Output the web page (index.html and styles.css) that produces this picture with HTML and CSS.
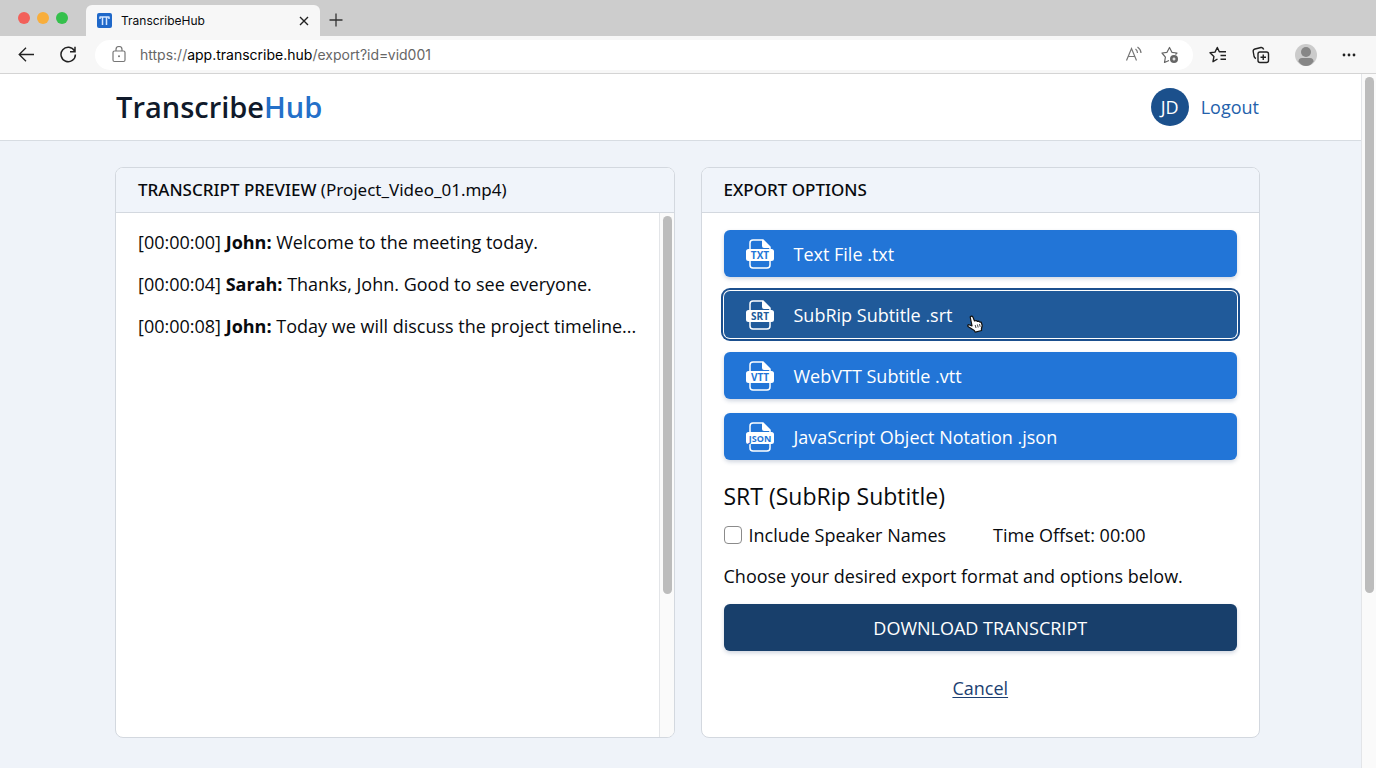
FILE: index.html
```
<!DOCTYPE html>
<html lang="en">
<head>
    <meta charset="UTF-8">
    <meta name="viewport" content="width=device-width, initial-scale=1.0">
    <title>TranscribeHub</title>
    <link rel="stylesheet" href="styles.css">
</head>
<body>
    <div class="tabbar">
        <div class="lights">
            <span class="light red"></span>
            <span class="light yellow"></span>
            <span class="light green"></span>
        </div>
        <div class="tab">
            <svg class="favicon" width="15" height="15" viewBox="0 0 15 15">
                <rect width="15" height="15" rx="2" fill="#1f68c9"/>
                <path d="M2.500 4h10M5.500 4v8M9.500 4v8M3 6V4M12 6V4" fill="none" stroke="#d5e6ff" stroke-width="1.500"/>
            </svg>
            <span class="tab-title">TranscribeHub</span>
            <button class="icon-btn" aria-label="Close tab">
                <svg width="10" height="10" viewBox="0 0 10 10" fill="none" stroke="#222" stroke-width="1.4"><path d="M1 1l8 8M9 1l-8 8"/></svg>
            </button>
        </div>
        <button class="icon-btn new-tab" aria-label="New tab">
            <svg width="14" height="14" viewBox="0 0 14 14" fill="none" stroke="#333" stroke-width="1.3"><path d="M7 0.500v13M0.500 7h13"/></svg>
        </button>
    </div>

    <div class="toolbar">
        <button class="icon-btn" aria-label="Back">
            <svg width="18" height="18" viewBox="0 0 18 18" fill="none" stroke="#222" stroke-width="1.3"><path d="M16 8.500H1.500M8 1.700L1.200 8.500l6.800 6.800"/></svg>
        </button>
        <button class="icon-btn" aria-label="Reload">
            <svg width="18" height="18" viewBox="0 0 18 18" fill="none" stroke="#222" stroke-width="1.5"><path d="M14.500 5A7.200 7.200 0 1 0 15.400 8.500M15 .8v5h-5"/></svg>
        </button>
        <div class="address">
            <svg width="14" height="18" viewBox="0 0 14 18" fill="none" stroke="#777" stroke-width="1.2"><rect x="1" y="5" width="12" height="10.500" rx="1.500"/><path d="M4 5V3.500a3 3 0 0 1 6 0V5"/><circle cx="7" cy="10.300" r="1" fill="#777" stroke="none"/></svg>
            <span class="url">https://<b>app.transcribe.hub</b>/export?id=vid001</span>
            <button class="icon-btn" aria-label="Read aloud">
                <svg width="18" height="18" viewBox="0 0 18 18" fill="none" stroke="#777" stroke-width="1.2"><path d="M1.500 14.500L6.500 2.500l5 12M3.300 10.500h6.400M10.500 3q2 1.500 2 4M12.500 1q3.500 2.500 3.500 6"/></svg>
            </button>
            <button class="icon-btn" aria-label="Add to favorites">
                <svg width="18" height="18" viewBox="0 0 18 18" fill="none" stroke="#666" stroke-width="1.200" stroke-linejoin="round"><path d="M8 14.500l-4.500 2 .9-5.400L1 7l5-.7L8.500 1.500l2.400 4.800 5.100.7-1.500 1.500"/><circle cx="13" cy="13" r="4" fill="#666" stroke="none"/><path d="M13 11.500v3M11.500 13h3" stroke="#fff"/></svg>
            </button>
        </div>
        <div class="tools">
            <button class="icon-btn" aria-label="Favorites">
                <svg width="18" height="18" viewBox="0 0 18 18" fill="none" stroke="#222" stroke-width="1.400" stroke-linejoin="round"><path d="M8.500 13L4 15.700l.9-5.100L1 6.800l5-.7 2.300-4.600 2 4.300H17M11.500 9.500H17M11.500 13.200H17"/></svg>
            </button>
            <button class="icon-btn" aria-label="Collections">
                <svg width="18" height="18" viewBox="0 0 18 18" fill="none" stroke="#222" stroke-width="1.400" stroke-linejoin="round"><rect x="6" y="6" width="10.500" height="10.500" rx="2"/><path d="M11.250 8.500v5.500M8.500 11.250H14M4 12.500q-1.500-.5-1.900-2L1.200 5.500Q1 3.500 3 3l6-1.500q2-.3 2.700 2"/></svg>
            </button>
            <button class="icon-btn" aria-label="Profile">
                <svg width="22" height="22" viewBox="0 0 22 22"><circle cx="11" cy="11" r="11" fill="#cbcbcb"/><circle cx="11" cy="8" r="5" fill="#868686"/><path d="M3.500 17.500Q3.500 14 7 14h8q3.500 0 3.500 3.500Q15.500 22 11 22t-7.500-4.500z" fill="#868686"/></svg>
            </button>
            <button class="icon-btn" aria-label="Settings">
                <svg width="14" height="4" viewBox="0 0 14 4" fill="#222"><circle cx="2" cy="2" r="1.400"/><circle cx="7" cy="2" r="1.400"/><circle cx="12" cy="2" r="1.400"/></svg>
            </button>
        </div>
    </div>

    <div class="viewport">
        <div class="page">
            <header class="header">
                <div class="logo">Transcribe<span>Hub</span></div>
                <div class="user">
                    <span class="avatar">JD</span>
                    <a class="logout" href="#">Logout</a>
                </div>
            </header>

            <main class="main">
                <section class="panel">
                    <h2 class="panel-head">TRANSCRIPT PREVIEW <span>(Project_Video_01.mp4)</span></h2>
                    <div class="preview">
                        <div class="lines">
                            <p>[00:00:00] <b>John:</b> Welcome to the meeting today.</p>
                            <p>[00:00:04] <b>Sarah:</b> Thanks, John. Good to see everyone.</p>
                            <p>[00:00:08] <b>John:</b> Today we will discuss the project timeline...</p>
                        </div>
                        <div class="scrollbar"><div class="thumb preview-thumb"></div></div>
                    </div>
                </section>

                <section class="panel">
                    <h2 class="panel-head">EXPORT OPTIONS</h2>
                    <div class="export">
                        <div class="formats">
                            <button class="format">
                                <svg class="file" width="28" height="30" viewBox="0 0 28 30"><path d="M4 11V4q0-3 3-3h10l7 7v4M4 20v6q0 3 3 3h14q3 0 3-3v-6" fill="none" stroke="#fff" stroke-width="1.500"/><path d="M16 1v6q0 2 2 2h6V8l-7-7zM2.500 10h23q2.500 0 2.500 2.500v7q0 2.500-2.500 2.500h-23Q0 22 0 19.500v-7Q0 10 2.500 10z" fill="#fff"/><text x="14" y="20" text-anchor="middle">TXT</text></svg>
                                Text File .txt
                            </button>
                            <button class="format active">
                                <svg class="file" width="28" height="30" viewBox="0 0 28 30"><path d="M4 11V4q0-3 3-3h10l7 7v4M4 20v6q0 3 3 3h14q3 0 3-3v-6" fill="none" stroke="#fff" stroke-width="1.500"/><path d="M16 1v6q0 2 2 2h6V8l-7-7zM2.500 10h23q2.500 0 2.500 2.500v7q0 2.500-2.500 2.500h-23Q0 22 0 19.500v-7Q0 10 2.500 10z" fill="#fff"/><text x="14" y="20" text-anchor="middle">SRT</text></svg>
                                SubRip Subtitle .srt
                                <svg class="pointer" width="16" height="18" viewBox="0 0 16 18" fill="#fff" stroke="#111" stroke-width="1.200" stroke-linejoin="round"><path d="M3.200 2Q4.800.2 6 2.200L7.500 6l1.700-.5 1 .8 1.600-.2 1 1 1.400.1 1 3.300-.8 3.500.2 1.500-6.300 1.700-1-1.700L1 11.500Q.3 9.700 2 9.700l3 1.200z"/><path d="M8.200 10l.8 3M10.400 9.500l.8 3M12.500 9l.7 2.800" stroke-width=".8"/></svg>
                            </button>
                            <button class="format">
                                <svg class="file" width="28" height="30" viewBox="0 0 28 30"><path d="M4 11V4q0-3 3-3h10l7 7v4M4 20v6q0 3 3 3h14q3 0 3-3v-6" fill="none" stroke="#fff" stroke-width="1.500"/><path d="M16 1v6q0 2 2 2h6V8l-7-7zM2.500 10h23q2.500 0 2.500 2.500v7q0 2.500-2.500 2.500h-23Q0 22 0 19.500v-7Q0 10 2.500 10z" fill="#fff"/><text x="14" y="20" text-anchor="middle">VTT</text></svg>
                                WebVTT Subtitle .vtt
                            </button>
                            <button class="format">
                                <svg class="file json" width="28" height="30" viewBox="0 0 28 30"><path d="M4 11V4q0-3 3-3h10l7 7v4M4 20v6q0 3 3 3h14q3 0 3-3v-6" fill="none" stroke="#fff" stroke-width="1.500"/><path d="M16 1v6q0 2 2 2h6V8l-7-7zM2.500 10h23q2.500 0 2.500 2.500v7q0 2.500-2.500 2.500h-23Q0 22 0 19.500v-7Q0 10 2.500 10z" fill="#fff"/><text x="14" y="20" text-anchor="middle">JSON</text></svg>
                                JavaScript Object Notation .json
                            </button>
                        </div>
                        <h3 class="format-title">SRT (SubRip Subtitle)</h3>
                        <div class="options">
                            <label class="check"><input type="checkbox"> Include Speaker Names</label>
                            <span>Time Offset: 00:00</span>
                        </div>
                        <p class="hint">Choose your desired export format and options below.</p>
                        <button class="download">DOWNLOAD TRANSCRIPT</button>
                        <a class="cancel" href="#">Cancel</a>
                    </div>
                </section>
            </main>
        </div>
        <div class="scrollbar"><div class="thumb page-thumb"></div></div>
    </div>
</body>
</html>
```
FILE: styles.css
```
*{
    margin: 0; padding: 0;
    box-sizing: border-box;
}
body{
    display: flex;
    flex-direction: column;
    min-height: 100vh;
    font-family: 'Open Sans', sans-serif;
    font-size: 18px;
    line-height: 26px;
    color: #080a0e;
    background: #eff3f9;
}
button{
    font: inherit;
    border: none;
    cursor: pointer;
}
svg{
    display: block;
    flex: none;
}
.icon-btn{
    background: none;
}

/* browser window */
.tabbar{
    display: flex;
    align-items: center;
    height: 36px;
    padding-left: 18px;
    background: #cdcdcd;
    font-family: Inter, sans-serif;
}
.lights{
    display: flex;
    gap: 7px;
    width: 68px;
}
.light{
    width: 12px;
    height: 12px;
    border-radius: 50%;
}
.red{ background: #f2605a; }
.yellow{ background: #f8ae3c; }
.green{ background: #35c04c; }
.tab{
    display: flex;
    align-items: center;
    align-self: flex-end;
    gap: 9px;
    width: 234px;
    height: 31px;
    padding: 0 11px;
    border-radius: 6px 6px 0 0;
    background: #f7f7f7;
}
.tab-title{
    flex: 1;
    font-size: 12px;
}
.new-tab{
    margin-left: 9px;
    padding-top: 4px;
}
.toolbar{
    display: flex;
    align-items: center;
    gap: 24px;
    height: 38px;
    padding: 0 20px 0 18px;
    border-bottom: 1px solid #d4d4d4;
    background: #f7f7f7;
    font-family: Inter, sans-serif;
}
.address{
    display: flex;
    align-items: center;
    flex: 1;
    gap: 18px;
    height: 30px;
    margin-left: -7px;
    padding: 0 14px 0 17px;
    border-radius: 15px;
    background: #fff;
}
.url{
    flex: 1;
    margin-left: -4px;
    font-size: 14px;
    color: #666;
}
.url b{
    font-weight: 400;
    color: #000;
}
.tools{
    display: flex;
    align-items: center;
    gap: 25px;
    margin-left: -8px;
}

/* page */
.viewport{
    display: flex;
    flex: 1;
}
.page{
    display: flex;
    flex-direction: column;
    flex: 1;
}
.header{
    display: flex;
    align-items: center;
    justify-content: space-between;
    height: 67px;
    padding: 0 102px 0 116px;
    border-bottom: 1px solid #d7dce2;
    background: #fff;
}
.logo{
    font-size: 29px;
    line-height: 38px;
    font-weight: 600;
    color: #101a2b;
}
.logo span{
    color: #2470c9;
}
.user{
    display: flex;
    align-items: center;
    gap: 12px;
}
.avatar{
    width: 38px;
    height: 38px;
    border-radius: 50%;
    background: #1b508c;
    color: #fff;
    line-height: 38px;
    text-align: center;
}
.logout{
    color: #2461ab;
    text-decoration: none;
}
.main{
    display: flex;
    flex: 1;
    gap: 26px;
    padding: 26px 101px 30px 115px;
}
.panel{
    display: flex;
    flex-direction: column;
    flex: 1;
    border: 1px solid #d3d8df;
    border-radius: 8px;
    background: #fff;
    overflow: hidden;
}
.panel-head{
    height: 45px;
    padding: 0 22px;
    border-bottom: 1px solid #d3d8df;
    background: #f0f4fa;
    font-family: 'Noto Sans', sans-serif;
    font-size: 17px;
    line-height: 44px;
    font-weight: 500;
}
.panel-head span{
    font-weight: 400;
}
.preview{
    display: flex;
    flex: 1;
}
.lines{
    display: flex;
    flex-direction: column;
    flex: 1;
    gap: 16px;
    padding: 16px 0 16px 22px;
}
.scrollbar{
    flex: none;
    width: 15px;
    padding: 3px;
    border-left: 1px solid #e3e5e8;
    background: #fafafa;
}
.thumb{
    width: 9px;
    border-radius: 5px;
    background: #bcbcbc;
}
.preview-thumb{
    height: 73%;
}
.page-thumb{
    height: 75%;
}
.export{
    display: flex;
    flex-direction: column;
    padding: 17px 22px;
}
.formats{
    display: flex;
    flex-direction: column;
    gap: 14px;
}
.format, .download{
    height: 47px;
    border-radius: 6px;
    color: #fff;
    box-shadow: 0 2px 4px rgba(20, 50, 100, 0.2);
}
.format{
    position: relative;
    display: flex;
    align-items: center;
    gap: 20px;
    padding-left: 22px;
    background: #2275d7;
}
.format.active{
    background: #205a9a;
    box-shadow: 0 0 0 1px #fff, 0 0 0 3px #1b4f8e;
}
.file{
    fill: #2275d7;
    font-size: 10px;
    font-weight: bold;
}
.file.json{
    font-size: 9px;
}
.active .file{
    fill: #205a9a;
}
.pointer{
    position: absolute;
    left: 243px;
    top: 24px;
}
.format-title{
    margin-top: 21px;
    font-size: 23px;
    line-height: 30px;
    font-weight: 400;
}
.options{
    display: flex;
    gap: 47px;
    margin-top: 11px;
}
.check{
    display: flex;
    align-items: center;
    gap: 7px;
}
.check input{
    appearance: none;
    width: 18px;
    height: 18px;
    border: 1px solid #8b8b8b;
    border-radius: 4px;
    background: #fff;
}
.hint{
    margin-top: 15px;
}
.download{
    margin-top: 15px;
    background: #183f6b;
}
.cancel{
    align-self: center;
    margin-top: 24px;
    color: #1c3f72;
    text-underline-offset: 2px;
}
```
